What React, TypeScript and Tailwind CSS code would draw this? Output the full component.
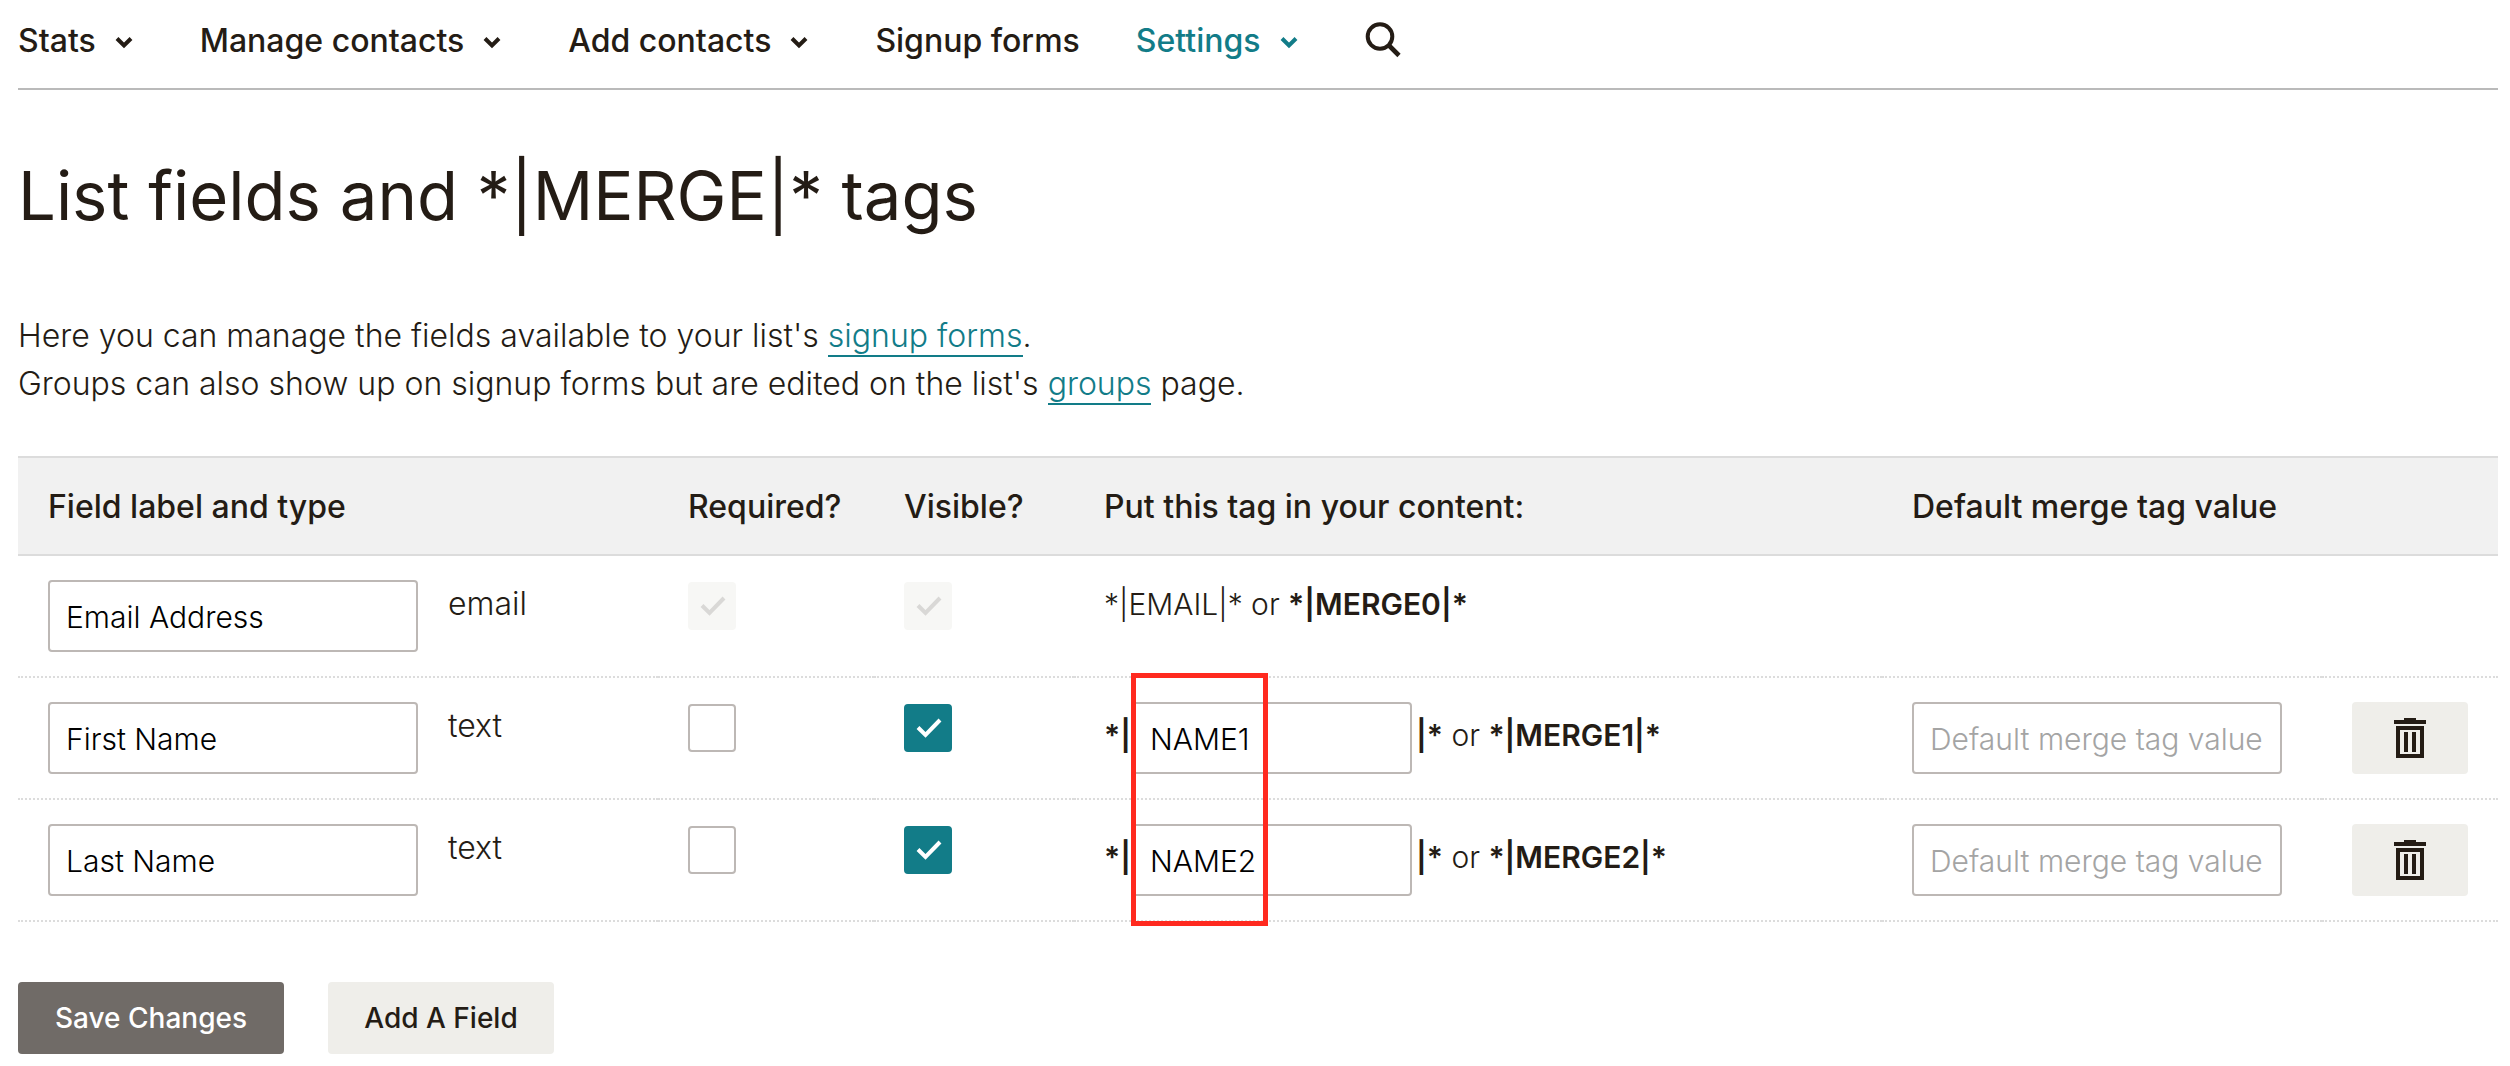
import { useState } from "react";
import type { ReactNode } from "react";

type Field = {
  id: string;
  label: string;
  type: string;
  tag: string;
  merge: string;
  required: boolean;
  visible: boolean;
  locked?: boolean;
};

const navItems = [
  { label: "Stats", menu: true },
  { label: "Manage contacts", menu: true },
  { label: "Add contacts", menu: true },
  { label: "Signup forms", menu: false },
  { label: "Settings", menu: true, active: true },
];

const initialFields: Field[] = [
  { id: "f0", label: "Email Address", type: "email", tag: "EMAIL", merge: "MERGE0", required: true, visible: true, locked: true },
  { id: "f1", label: "First Name", type: "text", tag: "NAME1", merge: "MERGE1", required: false, visible: true },
  { id: "f2", label: "Last Name", type: "text", tag: "NAME2", merge: "MERGE2", required: false, visible: true },
];

const inputClass =
  "h-[72px] rounded-[4px] border-2 border-[#bdb8b5] bg-white px-4 pt-[2px] text-[30px] font-light text-black placeholder:text-[#a4a4a4] placeholder:opacity-100";

function Chevron() {
  return (
    <svg className="ml-2 h-10 w-10" viewBox="0 0 40 40" fill="none" stroke="currentColor" strokeWidth="4">
      <path d="M13 17.5 20 24.5 27 17.5" />
    </svg>
  );
}

function SearchIcon() {
  return (
    <svg className="h-9 w-9" viewBox="0 0 36 36" fill="none" stroke="currentColor">
      <circle cx="15" cy="14.5" r="12.3" strokeWidth="4" />
      <path d="M23.5 23 34 33.5" strokeWidth="4.6" />
    </svg>
  );
}

function TrashIcon() {
  return (
    <svg className="h-10 w-8" viewBox="0 0 32 40" fill="currentColor">
      <path d="M10 0h12v2h10v4H0V2h10z" />
      <path fillRule="evenodd" d="M2 8h28v32H2zM6 12v24h20V12z" />
      <path d="M10 14h4v20h-4zM18 14h4v20h-4z" />
    </svg>
  );
}

function TickBox({
  label,
  checked,
  disabled,
  onChange,
}: {
  label: string;
  checked: boolean;
  disabled?: boolean;
  onChange: () => void;
}) {
  return (
    <label className="mt-[2px] grid h-12 w-12">
      <input
        type="checkbox"
        aria-label={label}
        checked={checked}
        disabled={disabled}
        onChange={onChange}
        className="col-start-1 row-start-1 h-12 w-12 appearance-none rounded-[4px] border-2 border-[#bdb8b5] bg-white checked:border-[#127c88] checked:bg-[#127c88] disabled:border-[#f7f7f5] disabled:bg-[#f7f7f5]"
      />
      {checked && (
        <svg
          className={`pointer-events-none col-start-1 row-start-1 h-12 w-12 ${disabled ? "text-[#d9d8d6]" : "text-white"}`}
          viewBox="0 0 48 48"
          fill="none"
          stroke="currentColor"
          strokeWidth="4"
        >
          <path d="M14 23.5 21.5 31 36 16" />
        </svg>
      )}
    </label>
  );
}

function Th({ children }: { children?: ReactNode }) {
  return (
    <th className="border-y-2 border-[#dcdcdc] bg-[#f1f1f1] pt-[25px] pb-[23px] pl-[30px] text-left font-medium whitespace-nowrap">
      {children}
    </th>
  );
}

function Td({ children }: { children?: ReactNode }) {
  return (
    <td className="border-b-2 border-dotted border-[#dcdcdc] py-6 pl-[30px] align-top whitespace-nowrap">
      {children}
    </td>
  );
}

export default function App() {
  const [fields, setFields] = useState(initialFields);

  const update = (id: string, patch: Partial<Field>) =>
    setFields((prev) => prev.map((f) => (f.id === id ? { ...f, ...patch } : f)));

  return (
    <div className="min-h-screen bg-white pr-3 pl-[18px] font-['Inter',sans-serif] text-[32px] leading-[48px] text-[#241c15]">
      <nav className="flex items-start gap-14 border-b-2 border-[#bababa] pt-[17px] pb-[23px] font-medium">
        {navItems.map((item) => (
          <a
            key={item.label}
            href="#"
            className={`flex items-center ${item.active ? "text-[#127c88]" : ""}`}
          >
            {item.label}
            {item.menu && <Chevron />}
          </a>
        ))}
        <button type="button" aria-label="Search" className="pt-[5px]">
          <SearchIcon />
        </button>
      </nav>

      <h1 className="mt-[62px] mb-[72px] text-[67px] leading-[88px]">
        List fields and *|MERGE|* tags
      </h1>

      <p className="font-light">
        Here you can manage the fields available to your list's{" "}
        <a href="#" className="border-b-2 border-[#127c88] text-[#127c88]">signup forms</a>.
        <br />
        Groups can also show up on signup forms but are edited on the list's{" "}
        <a href="#" className="border-b-2 border-[#127c88] text-[#127c88]">groups</a> page.
      </p>

      <table className="mt-12 w-full table-fixed border-separate border-spacing-0">
        <colgroup>
          <col className="w-[640px]" />
          <col className="w-[216px]" />
          <col className="w-[200px]" />
          <col />
          <col className="w-[440px]" />
          <col className="w-[176px]" />
        </colgroup>
        <thead>
          <tr>
            <Th>Field label and type</Th>
            <Th>Required?</Th>
            <Th>Visible?</Th>
            <Th>Put this tag in your content:</Th>
            <Th>Default merge tag value</Th>
            <Th />
          </tr>
        </thead>
        <tbody className="font-light">
          {fields.map((f, i) => (
            <tr key={f.id}>
              <Td>
                <div className="flex items-start gap-[30px]">
                  <input
                    type="text"
                    aria-label="Field label"
                    value={f.label}
                    onChange={(e) => update(f.id, { label: e.target.value })}
                    className={`w-[370px] ${inputClass}`}
                  />
                  <span>{f.type}</span>
                </div>
              </Td>
              <Td>
                <TickBox
                  label={`${f.label} required`}
                  checked={f.required}
                  disabled={f.locked}
                  onChange={() => update(f.id, { required: !f.required })}
                />
              </Td>
              <Td>
                <TickBox
                  label={`${f.label} visible`}
                  checked={f.visible}
                  disabled={f.locked}
                  onChange={() => update(f.id, { visible: !f.visible })}
                />
              </Td>
              <Td>
                {f.locked ? (
                  <div className="text-[30px]">
                    *|{f.tag}|* or <b className="font-semibold">*|{f.merge}|*</b>
                  </div>
                ) : (
                  <div className="flex items-center text-[30px]">
                    <b className="w-7 pb-1.5 font-semibold">*|</b>
                    <div className="relative mr-1 flex">
                      <input
                        type="text"
                        aria-label={`${f.label} tag`}
                        value={f.tag}
                        onChange={(e) => update(f.id, { tag: e.target.value })}
                        className={`w-[280px] ${inputClass}`}
                      />
                      {/* callout round both editable tags */}
                      {i === 1 && (
                        <div className="pointer-events-none absolute -top-[29px] -left-px z-10 h-[253px] w-[137px] border-5 border-[#ff2a1f]" />
                      )}
                    </div>
                    <div className="pb-1.5">
                      <b className="font-semibold">|*</b> or{" "}
                      <b className="font-semibold">*|{f.merge}|*</b>
                    </div>
                  </div>
                )}
              </Td>
              <Td>
                {!f.locked && (
                  <input
                    type="text"
                    aria-label={`${f.label} default merge tag value`}
                    placeholder="Default merge tag value"
                    className={`w-[370px] ${inputClass}`}
                  />
                )}
              </Td>
              <Td>
                {!f.locked && (
                  <button
                    type="button"
                    aria-label={`Delete ${f.label}`}
                    className="flex h-[72px] w-[116px] items-center justify-center rounded-[4px] bg-[#efeeea]"
                  >
                    <TrashIcon />
                  </button>
                )}
              </Td>
            </tr>
          ))}
        </tbody>
      </table>

      <div className="mt-[60px] flex gap-11 text-[28px] font-medium">
        <button type="button" className="h-[72px] w-[266px] rounded-[4px] bg-[#706b67] text-white">
          Save Changes
        </button>
        <button type="button" className="h-[72px] w-[226px] rounded-[4px] bg-[#efeeea]">
          Add A Field
        </button>
      </div>
    </div>
  );
}
